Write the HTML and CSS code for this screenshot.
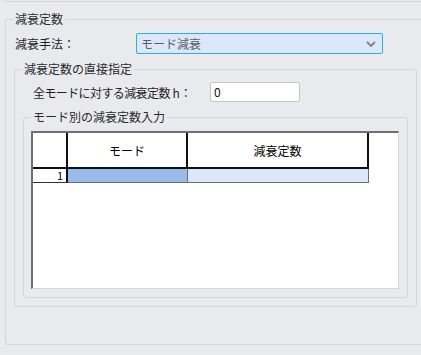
FILE: index.html
```html
<!DOCTYPE html>
<html lang="ja">
<head>
    <meta charset="UTF-8">
    <title>減衰定数</title>
    <link rel="stylesheet" href="styles.css">
</head>
<body>
    <div class="top-panel"></div>

    <fieldset class="group main-group">
        <legend>減衰定数</legend>

        <div class="field-row method-row">
            <span class="label method-label">減衰手法：</span>
            <div class="select">
                <span>モード減衰</span>
                <svg class="chevron" width="10" height="6" viewBox="0 0 10 6">
                    <path d="M1 1 L5 5 L9 1" fill="none" stroke="#7f8288" stroke-width="1.8"/>
                </svg>
            </div>
        </div>

        <fieldset class="group direct-group">
            <legend>減衰定数の直接指定</legend>

            <div class="field-row h-row">
                <span class="label h-label"><span class="tight">全モードに対する減衰定数</span> h：</span>
                <div class="text-input">0</div>
            </div>

            <fieldset class="group mode-group">
                <legend>モード別の減衰定数入力</legend>

                <div class="grid">
                    <div class="cell corner"></div>
                    <div class="cell col-head">モード</div>
                    <div class="cell col-head last-head">減衰定数</div>

                    <div class="cell row-head">1</div>
                    <div class="cell data selected"></div>
                    <div class="cell data"></div>
                </div>
            </fieldset>
        </fieldset>
    </fieldset>
</body>
</html>
```

FILE: styles.css
```css
html, body {
    margin: 0;
    padding: 0;
    overflow: hidden;
}

body {
    width: 421px;
    height: 355px;
    background-color: #e9eaee;
    font-family: "Noto Sans CJK JP", "Noto Sans", sans-serif;
    font-size: 12px;
    color: #1f1f1f;
}

.top-panel {
    height: 2px;
    margin-left: 3px;
    box-sizing: border-box;
    border-left: 1px solid #d3d5da;
    border-bottom: 1px solid #d3d5da;
    border-bottom-left-radius: 2px;
}

/* group boxes */
.group {
    border: 1px solid #d3d5da;
    border-radius: 3px;
    padding: 0;
    min-width: 0;
}

.group legend {
    margin-left: 7px;
    padding: 0 2px;
    line-height: 16px;
    color: #2a2a2a;
}

.main-group {
    margin: 9px 0 0 5px;
    border-right: none;
    border-top-right-radius: 0;
    border-bottom-right-radius: 0;
}

.direct-group {
    margin: 7px 4px 37px 8px;
}

.mode-group {
    margin: 7px 8px 8px 8px;
}

/* rows */
.field-row {
    display: flex;
    align-items: center;
}

.method-row {
    margin-top: 6px;
    padding-left: 9px;
}

.method-label {
    width: 121px;
}

.select {
    width: 247px;
    height: 21px;
    box-sizing: border-box;
    border: 1px solid #25b2e9;
    border-radius: 2px;
    background-color: #dce8f9;
    color: #5b5d62;
    display: flex;
    align-items: center;
    justify-content: space-between;
    padding: 0 6px 0 4px;
}

.h-row {
    margin-top: 5px;
    padding-left: 18px;
}

.h-label {
    width: 177px;
}

.tight {
    letter-spacing: -0.6px;
}

.text-input {
    width: 90px;
    height: 20px;
    box-sizing: border-box;
    border: 1px solid #c3c6cc;
    border-radius: 2px;
    background-color: white;
    line-height: 18px;
    padding-left: 3px;
    color: #111;
}

/* table */
.grid {
    margin: 6px 8px 8px 7px;
    height: 158px;
    box-sizing: border-box;
    background-color: white;
    border-top: 2px solid #707070;
    border-left: 2px solid #707070;
    border-right: 1px solid #d6d6d6;
    border-bottom: 1px solid #d6d6d6;
    display: grid;
    grid-template-columns: 35px 120px 181px;
    grid-template-rows: 36px 14px;
    align-content: start;
}

.cell {
    box-sizing: border-box;
}

.corner,
.col-head {
    border-right: 2px solid #111;
    border-bottom: 2px solid #111;
}

.col-head {
    display: flex;
    align-items: center;
    justify-content: center;
    color: #000;
}

.row-head {
    border-right: 2px solid #111;
    border-bottom: 1px solid #333;
    text-align: right;
    padding-right: 3px;
    line-height: 13px;
    font-size: 11px;
    color: #000;
}

.data {
    background-color: #dce8fa;
    border-right: 1px solid #6e6e6e;
    border-bottom: 1px solid #6e6e6e;
}

.data.selected {
    background-color: #98bbec;
}
```
